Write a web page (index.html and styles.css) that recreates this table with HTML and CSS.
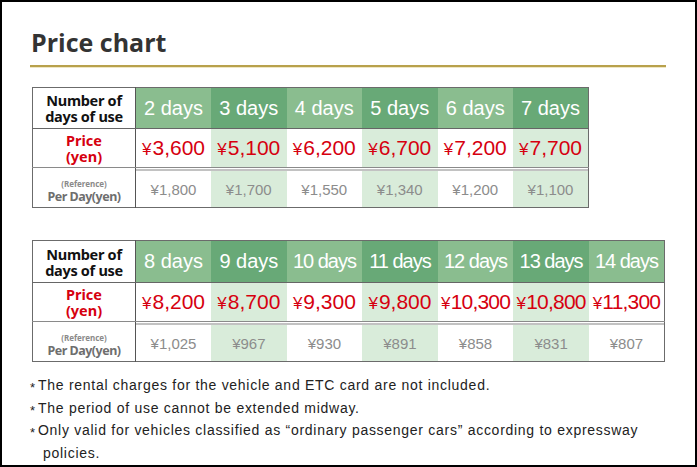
FILE: index.html
```html
<!DOCTYPE html>
<html lang="en">
<head>
<meta charset="utf-8">
<title>Price chart</title>
<link rel="stylesheet" href="styles.css">
</head>
<body>
<div class="page">
  <h1 class="title">Price chart</h1>

  <table class="chart chart-short">
    <colgroup><col class="c-head"><col span="6" class="c-day"></colgroup>
    <tr class="row-days">
      <th class="label">Number of<br>days of use</th>
      <th>2 days</th><th class="alt">3 days</th><th>4 days</th><th class="alt">5 days</th><th>6 days</th><th class="alt">7 days</th>
    </tr>
    <tr class="row-price">
      <th class="label">Price<br>(yen)</th>
      <td><span class="yen">¥</span>3,600</td><td class="alt"><span class="yen">¥</span>5,100</td><td><span class="yen">¥</span>6,200</td><td class="alt"><span class="yen">¥</span>6,700</td><td><span class="yen">¥</span>7,200</td><td class="alt"><span class="yen">¥</span>7,700</td>
    </tr>
    <tr class="row-per">
      <th class="label"><span class="ref">(Reference)</span><br>Per Day(yen)</th>
      <td>¥1,800</td><td class="alt">¥1,700</td><td>¥1,550</td><td class="alt">¥1,340</td><td>¥1,200</td><td class="alt">¥1,100</td>
    </tr>
  </table>

  <table class="chart chart-long">
    <colgroup><col class="c-head"><col span="7" class="c-day"></colgroup>
    <tr class="row-days">
      <th class="label">Number of<br>days of use</th>
      <th>8 days</th><th class="alt">9 days</th><th class="tight">10 days</th><th class="alt tight">11 days</th><th class="tight">12 days</th><th class="alt tight">13 days</th><th class="tight">14 days</th>
    </tr>
    <tr class="row-price">
      <th class="label">Price<br>(yen)</th>
      <td><span class="yen">¥</span>8,200</td><td class="alt"><span class="yen">¥</span>8,700</td><td><span class="yen">¥</span>9,300</td><td class="alt"><span class="yen">¥</span>9,800</td><td class="tight"><span class="yen">¥</span>10,300</td><td class="alt tight"><span class="yen">¥</span>10,800</td><td class="tight"><span class="yen">¥</span>11,300</td>
    </tr>
    <tr class="row-per">
      <th class="label"><span class="ref">(Reference)</span><br>Per Day(yen)</th>
      <td>¥1,025</td><td class="alt">¥967</td><td>¥930</td><td class="alt">¥891</td><td>¥858</td><td class="alt">¥831</td><td>¥807</td>
    </tr>
  </table>

  <ul class="notes">
    <li>The rental charges for the vehicle and ETC card are not included.</li>
    <li>The period of use cannot be extended midway.</li>
    <li>Only valid for vehicles classified as “ordinary passenger cars” according to expressway policies.</li>
  </ul>
</div>
</body>
</html>
```

FILE: styles.css
```css
html, body {
  margin: 0;
  padding: 0;
  background: #fff;
}

.page {
  box-sizing: border-box;
  width: 697px;
  height: 467px;
  border: 2px solid #000;
  padding: 0 29px 0 28px;
  overflow: hidden;
}

.title {
  margin: 25px 0 0 0;
  padding: 0 0 8px 1px;
  font-family: "Open Sans", "Noto Sans", sans-serif;
  font-weight: 700;
  font-size: 25px;
  line-height: 30px;
  color: #333;
  border-bottom: 2px solid #b8a14c;
  box-shadow: 0 1px 0 #efe7c4;
}

.chart {
  border-collapse: collapse;
  table-layout: fixed;
  margin-left: 2px;
  border: 1px solid #6b6b6b;
}

.chart-short {
  width: 557px;
  margin-top: 20px;
}

.chart-long {
  width: 633px;
  margin-top: 32px;
}

.c-head { width: 103px; }

.chart th,
.chart td {
  padding: 0;
  text-align: center;
  vertical-align: middle;
  white-space: nowrap;
}

.chart .label {
  border-right: 1px solid #555;
  background: #fff;
  font-family: "Noto Sans", "Open Sans", sans-serif;
  font-weight: 700;
}

/* header row */
.row-days th {
  height: 40px;
  border-bottom: 1px solid #666;
  background: #8abd8f;
  color: #fff;
  font-family: "Liberation Sans", Arial, sans-serif;
  font-weight: 400;
  font-size: 20px;
}

.row-days th.alt { background: #68a977; }

.row-days th.tight { letter-spacing: -1px; }

.row-days .label {
  color: #111;
  font-size: 14.5px;
  line-height: 16px;
  letter-spacing: -0.3px;
}

.chart-long .row-days th { height: 41px; }

/* price row */
.row-price th,
.row-price td {
  height: 38px;
  border-bottom: 1px solid #8a8a8a;
  background: #fff;
}

.row-price td {
  color: #d6000f;
  font-family: "Liberation Sans", Arial, sans-serif;
  font-size: 21px;
}

.row-price td.tight { letter-spacing: -0.8px; }

.row-price .yen {
  font-size: 17px;
  margin-right: 1px;
}

.row-price .label {
  color: #d6000f;
  font-size: 14.5px;
  line-height: 16px;
}

.chart .alt { background-color: #d9ecda; }
.row-days th.alt { background-color: #68a977; }

/* per-day row */
.row-per th,
.row-per td {
  height: 36px;
  padding-top: 3px;
  background-image: linear-gradient(to bottom, #fff 0, #fff 1px, #c2c2c2 1px, #c2c2c2 3px, transparent 3px);
  background-repeat: no-repeat;
}

.row-per td {
  background-color: #fff;
  color: #8c8c8c;
  font-family: "Liberation Sans", Arial, sans-serif;
  font-size: 15px;
}

.row-per td.alt { background-color: #d9ecda; }

.row-per .label {
  color: #6e6e6e;
  font-size: 12.5px;
  line-height: 13px;
  letter-spacing: -0.5px;
}

.row-per .ref {
  font-size: 8px;
  letter-spacing: 0;
  color: #8a8a8a;
}

/* notes */
.notes {
  list-style: none;
  margin: 12px 0 0 0;
  padding: 0 0 0 13px;
  font-family: "Liberation Sans", Arial, sans-serif;
  font-size: 14px;
  letter-spacing: 0.72px;
  line-height: 22.6px;
  color: #222;
}

.notes li {
  text-indent: -13px;
}

.notes li::before {
  content: "*";
  display: inline-block;
  width: 8px;
  line-height: 10px;
  text-indent: 0;
  letter-spacing: 0;
  font-size: 13px;
  vertical-align: -2px;
  text-align: left;
}
```
